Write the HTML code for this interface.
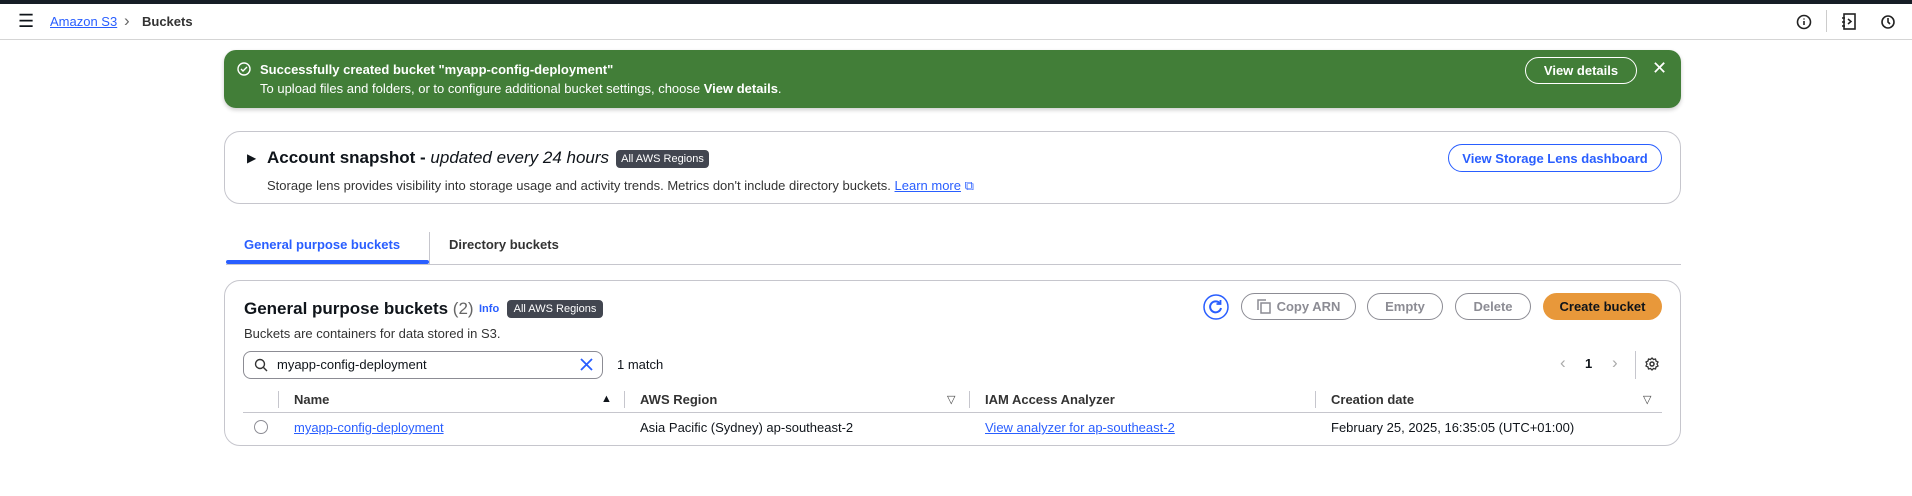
<!DOCTYPE html>
<html><head><meta charset="utf-8"><style>
*{box-sizing:border-box;margin:0;padding:0}
body{width:1912px;height:496px;background:#fff;font-family:"Liberation Sans",sans-serif;font-size:14px;color:#0f141a;position:relative;overflow:hidden}
.a{position:absolute;white-space:nowrap}
.link{color:#295eff;text-decoration:underline}
.btn{position:absolute;border:2px solid #8c8c94;border-radius:20px;color:#8c8c94;font-weight:bold;display:flex;align-items:center;justify-content:center;font-size:13px}
.badge{position:absolute;background:#424650;color:#fff;border-radius:4px;font-size:11px;display:flex;align-items:center;justify-content:center}
.card{position:absolute;left:224px;width:1457px;border:1px solid #c6c6cd;border-radius:16px}
.vd{position:absolute;width:1px;background:#c6c6cd}
</style></head><body>
<div class="a" style="left:0;top:0;width:1912px;height:4px;background:#161d26"></div>
<div class="a" style="left:0;top:39px;width:1912px;height:1px;background:#d5d5d5"></div>
<div class="a" style="left:18px;top:11px;font-size:18px">☰</div>
<div class="a link" style="left:50px;top:14px;font-size:13px">Amazon S3</div>
<div class="a" style="left:124px;top:11px;color:#666;font-size:17px">›</div>
<div class="a" style="left:142px;top:14px;font-weight:bold;color:#333;font-size:13px">Buckets</div>
<svg class="a" style="left:1796px;top:14px" width="16" height="16" viewBox="0 0 16 16"><circle cx="8" cy="8" r="6.5" fill="none" stroke="#222" stroke-width="1.6"/><path d="M8 7v4M8 4.5v1" stroke="#222" stroke-width="1.6"/></svg>
<div class="a" style="left:1826px;top:10px;width:1px;height:22px;background:#ccc"></div>
<svg class="a" style="left:1842px;top:13px" width="14" height="17" viewBox="0 0 14 17"><rect x="2" y="1" width="11" height="15" fill="none" stroke="#222" stroke-width="1.6"/><path d="M0 5h3M0 9h3M0 13h3M6 6l3 2.5-3 2.5" fill="none" stroke="#222" stroke-width="1.5"/></svg>
<svg class="a" style="left:1880px;top:14px" width="16" height="16" viewBox="0 0 16 16"><circle cx="8" cy="8" r="6" fill="none" stroke="#222" stroke-width="1.6"/><path d="M8 4v4l2 2" fill="none" stroke="#222" stroke-width="1.6"/></svg>

<div class="a" style="left:224px;top:50px;width:1457px;height:58px;background:#427e38;border-radius:12px;box-shadow:0 2px 4px rgba(0,0,0,.2)"></div>
<svg class="a" style="left:237px;top:62px" width="14" height="14" viewBox="0 0 14 14"><circle cx="7" cy="7" r="6" fill="none" stroke="#fff" stroke-width="1.4"/><path d="M4 7l2 2 4-4" fill="none" stroke="#fff" stroke-width="1.4"/></svg>
<div class="a" style="left:260px;top:62px;color:#fff;font-weight:bold;font-size:13px">Successfully created bucket "myapp-config-deployment"</div>
<div class="a" style="left:260px;top:81px;color:#fff;font-size:13px">To upload files and folders, or to configure additional bucket settings, choose <b>View details</b>.</div>
<div class="btn" style="left:1525px;top:57px;width:112px;height:27px;border-color:#fff;color:#fff;border-width:1.5px">View details</div>
<div class="a" style="left:1652px;top:58px;color:#fff;font-size:18px">✕</div>

<div class="card" style="top:131px;height:73px"></div>
<div class="a" style="left:247px;top:151px;font-size:12px">▶</div>
<div class="a" style="left:267px;top:148px;font-size:17px;font-weight:bold">Account snapshot - <i style="font-weight:normal">updated every 24 hours</i></div>
<div class="badge" style="left:616px;top:150px;width:93px;height:18px">All AWS Regions</div>
<div class="a" style="left:267px;top:178px;font-size:13px;color:#333">Storage lens provides visibility into storage usage and activity trends. Metrics don't include directory buckets. <span class="link">Learn more</span> <span style="color:#295eff">⧉</span></div>
<div class="btn" style="left:1448px;top:144px;width:214px;height:28px;border-color:#295eff;color:#295eff;border-width:1.5px">View Storage Lens dashboard</div>

<div class="a" style="left:244px;top:237px;font-weight:bold;color:#295eff;font-size:13px">General purpose buckets</div>
<div class="a" style="left:226px;top:260px;width:203px;height:4px;background:#295eff;border-radius:2px"></div>
<div class="a" style="left:429px;top:232px;width:1px;height:32px;background:#c6c6cd"></div>
<div class="a" style="left:449px;top:237px;font-weight:bold;color:#333;font-size:13px">Directory buckets</div>
<div class="a" style="left:226px;top:264px;width:1455px;height:1px;background:#c6c6cd"></div>

<div class="card" style="top:280px;height:166px"></div>
<div class="a" style="left:244px;top:299px;font-size:17px;font-weight:bold">General purpose buckets <span style="font-weight:normal;color:#666">(2)</span></div>
<div class="a" style="left:479px;top:303px;font-size:11px;font-weight:bold;color:#295eff">Info</div>
<div class="badge" style="left:507px;top:300px;width:96px;height:18px">All AWS Regions</div>
<div class="a" style="left:244px;top:326px;font-size:13px;color:#333">Buckets are containers for data stored in S3.</div>
<div class="a" style="left:243px;top:351px;width:360px;height:28px;border:1px solid #8c8c94;border-radius:8px"></div>
<svg class="a" style="left:254px;top:358px" width="14" height="14" viewBox="0 0 14 14"><circle cx="6" cy="6" r="4.5" fill="none" stroke="#333" stroke-width="1.4"/><path d="M9.5 9.5L13 13" stroke="#333" stroke-width="1.4"/></svg>
<div class="a" style="left:277px;top:357px;font-size:13px">myapp-config-deployment</div>
<svg class="a" style="left:580px;top:358px" width="13" height="13" viewBox="0 0 13 13"><path d="M1 1l11 11M12 1L1 12" stroke="#295eff" stroke-width="1.8"/></svg>
<div class="a" style="left:617px;top:357px;font-size:13px">1 match</div>

<svg class="a" style="left:1203px;top:294px" width="26" height="26" viewBox="0 0 26 26"><circle cx="13" cy="13" r="12" fill="none" stroke="#295eff" stroke-width="1.5"/><path d="M17 9.5A5.5 5.5 0 1 0 18 14" fill="none" stroke="#295eff" stroke-width="2"/><path d="M17.5 6v4h-4" fill="none" stroke="#295eff" stroke-width="1.8"/></svg>
<div class="btn" style="left:1241px;top:293px;width:115px;height:27px;border-width:1.5px"><svg width="14" height="15" viewBox="0 0 14 15" style="margin-right:6px"><rect x="4" y="4" width="9" height="10" fill="none" stroke="#8c8c94" stroke-width="1.5"/><path d="M1 11V1h8" fill="none" stroke="#8c8c94" stroke-width="1.5"/></svg>Copy ARN</div>
<div class="btn" style="left:1367px;top:293px;width:76px;height:27px;border-width:1.5px">Empty</div>
<div class="btn" style="left:1455px;top:293px;width:76px;height:27px;border-width:1.5px">Delete</div>
<div class="btn" style="left:1543px;top:293px;width:119px;height:27px;border:none;background:#e8983a;color:#0f141a">Create bucket</div>

<div class="a" style="left:1560px;top:353px;color:#aaa;font-size:17px">‹</div>
<div class="a" style="left:1585px;top:356px;font-weight:bold;font-size:13px">1</div>
<div class="a" style="left:1612px;top:353px;color:#aaa;font-size:17px">›</div>
<div class="a" style="left:1635px;top:351px;width:1px;height:28px;background:#c6c6cd"></div>
<svg class="a" style="left:1645px;top:357px" width="14" height="14" viewBox="0 0 14 14"><circle cx="7" cy="7" r="2" fill="none" stroke="#333" stroke-width="1.5"/><path d="M7 1l1.5 1.5 2-.5.5 2 2 1-1 2 1 2-2 1-.5 2-2-.5L7 13l-1.5-1.5-2 .5-.5-2-2-1 1-2-1-2 2-1 .5-2 2 .5z" fill="none" stroke="#333" stroke-width="1.3"/></svg>

<div class="vd" style="left:278px;top:391px;height:17px"></div>
<div class="a" style="left:294px;top:392px;font-weight:bold;color:#333;font-size:13px">Name</div>
<div class="a" style="left:601px;top:393px;font-size:11px">▲</div>
<div class="vd" style="left:624px;top:391px;height:17px"></div>
<div class="a" style="left:640px;top:392px;font-weight:bold;color:#333;font-size:13px">AWS Region</div>
<div class="a" style="left:947px;top:393px;font-size:11px;color:#444">▽</div>
<div class="vd" style="left:969px;top:391px;height:17px"></div>
<div class="a" style="left:985px;top:392px;font-weight:bold;color:#333;font-size:13px">IAM Access Analyzer</div>
<div class="vd" style="left:1315px;top:391px;height:17px"></div>
<div class="a" style="left:1331px;top:392px;font-weight:bold;color:#333;font-size:13px">Creation date</div>
<div class="a" style="left:1643px;top:393px;font-size:11px;color:#444">▽</div>
<div class="a" style="left:243px;top:412px;width:1419px;height:1px;background:#c6c6cd"></div>
<div class="a" style="left:254px;top:420px;width:14px;height:14px;border:1.5px solid #8c8c94;border-radius:50%"></div>
<div class="a link" style="left:294px;top:420px;font-size:13px">myapp-config-deployment</div>
<div class="a" style="left:640px;top:420px;font-size:13px">Asia Pacific (Sydney) ap-southeast-2</div>
<div class="a link" style="left:985px;top:420px;font-size:13px">View analyzer for ap-southeast-2</div>
<div class="a" style="left:1331px;top:420px;font-size:13px">February 25, 2025, 16:35:05 (UTC+01:00)</div>
</body></html>
